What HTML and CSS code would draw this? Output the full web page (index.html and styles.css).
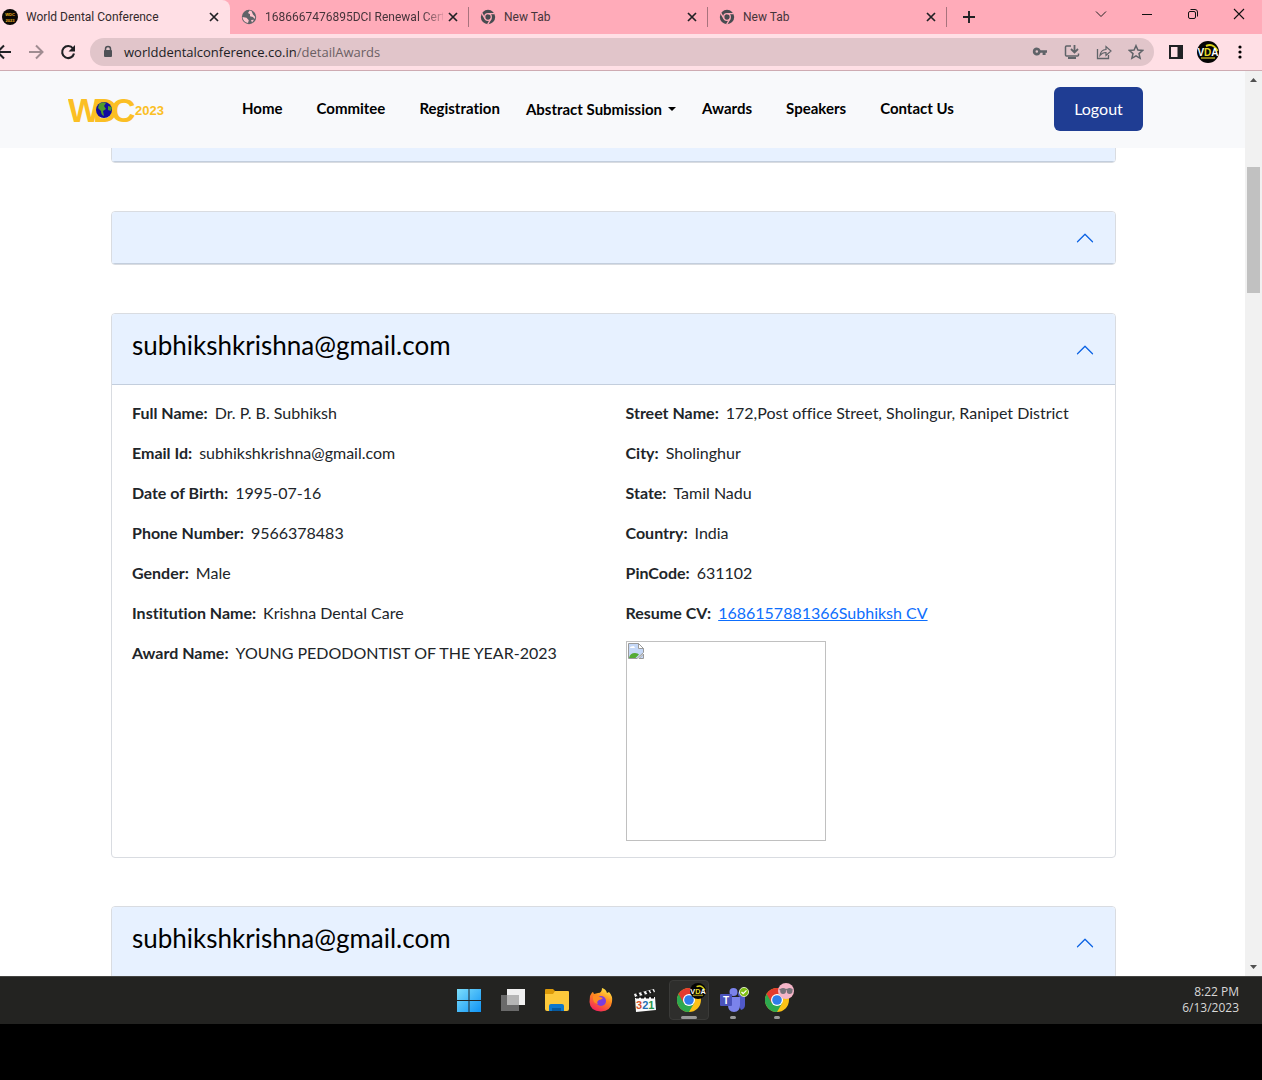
FILE: index.html
```html
<!DOCTYPE html>
<html lang="en">
<head>
<meta charset="utf-8">
<meta name="viewport" content="width=device-width, initial-scale=1">
<title>World Dental Conference</title>
<link rel="stylesheet" href="styles.css">
</head>
<body>
<svg class="defs" aria-hidden="true">
  <symbol id="close" viewBox="0 0 16 16"><path d="M4 4l8 8M12 4l-8 8" stroke="#202124" stroke-width="1.7"/></symbol>
  <symbol id="chrome-gray" viewBox="0 0 16 16"><circle cx="8" cy="8" r="7.2" fill="#474b50"/><circle cx="8" cy="8" r="3.3" fill="none" stroke="#ffabb9" stroke-width="1.3"/><path d="M8 4.6h6.6M5 9.7L1.8 4.2M11 9.7l-3.3 5.6" stroke="#ffabb9" stroke-width="1.3"/></symbol>
  <symbol id="chrome" viewBox="0 0 24 24"><circle cx="12" cy="12" r="12" fill="#fbc116"/><path d="M12 12L1.6 6A12 12 0 0 0 12 24l5.2-9z" fill="#2da94f"/><path d="M1.6 6A12 12 0 0 1 22.4 6H12l-5.2 9z" fill="#e33b2e"/><circle cx="12" cy="12" r="6" fill="#fff"/><circle cx="12" cy="12" r="4.8" fill="#2f7de9"/></symbol>
  <symbol id="chevron" viewBox="0 0 16 16"><path d="M1.646 4.646a.5.5 0 0 1 .708 0L8 10.293l5.646-5.647a.5.5 0 0 1 .708.708l-6 6a.5.5 0 0 1-.708 0l-6-6a.5.5 0 0 1 0-.708z" fill="#0c63e4" transform="rotate(180 8 8)"/></symbol>
  <symbol id="vda" viewBox="0 0 22 22"><circle cx="11" cy="11" r="11" fill="#050505"/><path d="M9 5Q16 1.500 20.500 10" fill="none" stroke="#d9d21c" stroke-width="2"/><path d="M4 17h14" stroke="#8a7d18" stroke-width="2"/><text x="11" y="15" text-anchor="middle" class="vda-text">V<tspan fill="#e8dd25">D</tspan>A</text></symbol>
</svg>

<header class="browser">
  <div class="tabstrip">
    <div class="tab tab-active">
      <svg class="fav" viewBox="0 0 16 16"><circle cx="8" cy="8" r="8" fill="#0a0805"/><text x="8" y="7" text-anchor="middle" class="fav-text">WDC</text><text x="8" y="13" text-anchor="middle" class="fav-text">2023</text></svg>
      <span class="tab-title">World Dental Conference</span>
      <button class="plain" aria-label="Close tab"><svg class="ic16"><use href="#close"/></svg></button>
    </div>
    <div class="tab">
      <svg class="fav" viewBox="0 0 16 16"><circle cx="8" cy="8" r="7.200" fill="#5f6368"/><path d="M8.500 1.500L7 4l2 1.300v2l3 .7 1.500 2L14.300 8 12 5.500 10.500 2zM1.500 8l4 .7 2.300 2.500L7 14Q2 13 1.500 8zM10 11l3-.3-2 2.800z" fill="#ffc4cd"/></svg>
      <span class="tab-title tab-fade">1686667476895DCI Renewal Cert</span>
      <button class="plain" aria-label="Close tab"><svg class="ic16"><use href="#close"/></svg></button>
    </div>
    <div class="tab">
      <svg class="fav"><use href="#chrome-gray"/></svg>
      <span class="tab-title">New Tab</span>
      <button class="plain" aria-label="Close tab"><svg class="ic16"><use href="#close"/></svg></button>
    </div>
    <div class="tab">
      <svg class="fav"><use href="#chrome-gray"/></svg>
      <span class="tab-title">New Tab</span>
      <button class="plain" aria-label="Close tab"><svg class="ic16"><use href="#close"/></svg></button>
    </div>
    <button class="plain new-tab" aria-label="New tab"><svg class="ic16" viewBox="0 0 16 16"><path d="M8 2v12M2 8h12" stroke="#202124" stroke-width="1.900"/></svg></button>
    <div class="win-controls">
      <button class="plain" aria-label="Search tabs"><svg class="ic16" viewBox="0 0 16 16"><path d="M3 5.500l5 5 5-5" fill="none" stroke="#222"/></svg></button>
      <button class="plain" aria-label="Minimize"><svg class="ic16" viewBox="0 0 16 16"><path d="M3 8.500h10" stroke="#111"/></svg></button>
      <button class="plain" aria-label="Restore"><svg class="ic16" viewBox="0 0 16 16"><rect x="3.500" y="5.500" width="7" height="7" rx="1.500" fill="none" stroke="#111"/><path d="M5.500 3.500H10a2.500 2.500 0 0 1 2.500 2.500v4.500" fill="none" stroke="#111"/></svg></button>
      <button class="plain" aria-label="Close"><svg class="ic16" viewBox="0 0 16 16"><path d="M3 3l10 10M13 3L3 13" stroke="#111" stroke-width="1.100"/></svg></button>
    </div>
  </div>
  <div class="toolbar">
    <div class="history">
      <button class="plain" aria-label="Back"><svg class="ic16" viewBox="0 0 16 16"><path d="M15 8H2M8 1.500L1.500 8 8 14.500" fill="none" stroke="#202124" stroke-width="2"/></svg></button>
      <button class="plain" aria-label="Forward"><svg class="ic16" viewBox="0 0 16 16"><path d="M1 8h13M8 1.500L14.500 8 8 14.500" fill="none" stroke="#a08c91" stroke-width="2"/></svg></button>
      <button class="plain" aria-label="Reload"><svg class="ic16" viewBox="0 0 16 16"><path d="M13 4.500A6 6 0 1 0 14 9.500" fill="none" stroke="#202124" stroke-width="2.100"/><path d="M15 1v6.500H8.500z" fill="#202124"/></svg></button>
    </div>
    <div class="omnibox">
      <svg class="lock" viewBox="0 0 10 14"><path d="M2.500 6V4a2.500 2.500 0 0 1 5 0v2" fill="none" stroke="#4e5156" stroke-width="1.500"/><rect x="1" y="5" width="8" height="7" rx="1" fill="#4e5156"/></svg>
      <span class="url">worlddentalconference.co.in<span class="url-path">/detailAwards</span></span>
      <div class="omni-icons">
        <svg class="ic16" viewBox="0 0 16 16"><path d="M4.800 3.500a4 4 0 1 0 3.800 5.300h2V11h3V8.800H15V6.200H8.600A4 4 0 0 0 4.800 3.500zm0 2.700a1.300 1.300 0 1 1 0 2.600 1.300 1.300 0 0 1 0-2.600z" fill="#5f6368"/></svg>
        <svg class="ic16" viewBox="0 0 16 16"><path d="M7 2H2.500Q1.500 2 1.500 3v8q0 1 1 1h11q1 0 1-1V9.500" fill="none" stroke="#5f6368" stroke-width="1.500"/><path d="M10.500 1v7M7 5l3.500 3.500L14 5M4 14h8" fill="none" stroke="#5f6368" stroke-width="1.800"/></svg>
        <svg class="ic16" viewBox="0 0 16 16"><path d="M1.500 5v9.500h11V11" fill="none" stroke="#5f6368" stroke-width="1.300"/><path d="M4 11.500Q4.500 6 10 5.500V2.500L15 7l-5 4.500V8.500Q6.500 8.300 4 11.500z" fill="none" stroke="#5f6368" stroke-width="1.200"/></svg>
        <svg class="ic16" viewBox="0 0 16 16"><path d="M8 1.700l1.900 4.400 4.700.4L11 9.600l1.100 4.700L8 11.800l-4.100 2.500L5 9.600 1.400 6.500l4.700-.4z" fill="none" stroke="#5f6368" stroke-width="1.500"/></svg>
      </div>
    </div>
    <div class="tools">
      <button class="plain" aria-label="Side panel"><svg class="ic16" viewBox="0 0 16 16"><rect x="2" y="2" width="12" height="12" fill="none" stroke="#202124" stroke-width="2"/><path d="M9.500 2H14v12H9.500z" fill="#202124"/></svg></button>
      <button class="plain" aria-label="Profile"><svg class="avatar"><use href="#vda"/></svg></button>
      <button class="plain" aria-label="Menu"><svg class="ic16" viewBox="0 0 16 16"><circle cx="8" cy="3" r="1.600"/><circle cx="8" cy="8" r="1.600"/><circle cx="8" cy="13" r="1.600"/></svg></button>
    </div>
  </div>
</header>

<div class="viewport">
  <div class="page">
    <nav class="navbar">
      <a href="#" class="logo" aria-label="WDC 2023">
        <svg viewBox="0 0 96 30"><text x="0 25 43" y="28" class="logo-wdc">WDC</text><text x="67" y="21" class="logo-year">2023</text><circle cx="36" cy="16" r="8" fill="#120ba0"/><path d="M31 10q4-3 7-1l-2 3 2 3-3 2 1 5q-3-1-3-5l-3-3zM40 12l4 1-1 4-3-1z" fill="#4f9a2c"/></svg>
      </a>
      <ul class="menu">
        <li><a href="#">Home</a></li>
        <li><a href="#">Commitee</a></li>
        <li><a href="#">Registration</a></li>
        <li class="dropdown"><a href="#">Abstract Submission</a></li>
        <li><a href="#">Awards</a></li>
        <li><a href="#">Speakers</a></li>
        <li><a href="#">Contact Us</a></li>
      </ul>
      <button class="logout">Logout</button>
    </nav>
    <main class="list">
      <section class="card card-passed"><button class="card-head" aria-label="Toggle"><svg class="chev"><use href="#chevron"/></svg></button></section>
      <section class="card"><button class="card-head" aria-label="Toggle"><svg class="chev"><use href="#chevron"/></svg></button></section>
      <section class="card">
        <button class="card-head"><span class="card-title">subhikshkrishna@gmail.com</span><svg class="chev"><use href="#chevron"/></svg></button>
        <div class="card-body">
          <div class="col">
            <p><b>Full Name:</b>Dr. P. B. Subhiksh</p>
            <p><b>Email Id:</b>subhikshkrishna@gmail.com</p>
            <p><b>Date of Birth:</b>1995-07-16</p>
            <p><b>Phone Number:</b>9566378483</p>
            <p><b>Gender:</b>Male</p>
            <p><b>Institution Name:</b>Krishna Dental Care</p>
            <p><b>Award Name:</b>YOUNG PEDODONTIST OF THE YEAR-2023</p>
          </div>
          <div class="col">
            <p><b>Street Name:</b>172,Post office Street, Sholingur, Ranipet District</p>
            <p><b>City:</b>Sholinghur</p>
            <p><b>State:</b>Tamil Nadu</p>
            <p><b>Country:</b>India</p>
            <p><b>PinCode:</b>631102</p>
            <p><b>Resume CV:</b><a href="#">1686157881366Subhiksh CV</a></p>
            <div class="photo"><svg class="ic16" viewBox="0 0 16 16"><path d="M.5.500h10l5 5v4L9 15.500H.5z" fill="#c5d8f7" stroke="#9a9a9a"/><path d="M10.500.500v5h5z" fill="#fff" stroke="#9a9a9a"/><path d="M2 5q0-2 2-1.500Q6 2 7 5z" fill="#fff"/><path d="M1 15q1-5 6-5 3 0 4 1.500L7.500 15z" fill="#54ab35"/><path d="M15.500 11v4.500H11z" fill="#c5d8f7" stroke="#9a9a9a"/></svg></div>
          </div>
        </div>
      </section>
      <section class="card">
        <button class="card-head"><span class="card-title">subhikshkrishna@gmail.com</span><svg class="chev"><use href="#chevron"/></svg></button>
      </section>
    </main>
  </div>
  <div class="scrollbar" aria-hidden="true">
    <svg class="arrow" viewBox="0 0 17 17"><path d="M5 11l3.500-4 3.500 4z" fill="#505050"/></svg>
    <div class="track"><div class="thumb"></div></div>
    <svg class="arrow" viewBox="0 0 17 17"><path d="M5 6l3.500 4L12 6z" fill="#505050"/></svg>
  </div>
</div>

<footer class="taskbar">
  <div class="apps">
    <button class="app" aria-label="Start"><svg viewBox="0 0 24 24"><defs><linearGradient id="w" x1="0" y1="0" x2="24" y2="24" gradientUnits="userSpaceOnUse"><stop stop-color="#7fe0fb"/><stop offset="1" stop-color="#0f93f5"/></linearGradient></defs><path d="M0 1h11.500v11H0zM12.500 1H24v11H12.500zM0 13h11.500v11H0zM12.500 13H24v11H12.500z" fill="url(#w)"/></svg></button>
    <button class="app" aria-label="Task view"><svg viewBox="0 0 24 24"><path d="M6 1h18v16H6z" fill="#f0f0f0"/><path d="M0 7h18v16H0z" fill="#6a6a6a"/><path d="M6 7h12v10H6z" fill="#b5b5b5"/></svg></button>
    <button class="app" aria-label="File Explorer"><svg viewBox="0 0 24 24"><path d="M0 2q0-1 1-1h7l3 3v5H0z" fill="#dc9a09"/><path d="M10 3h13q1 0 1 1v17q0 2-2 2H2q-2 0-2-2V6h8z" fill="#fdc93b"/><path d="M4 23v-5q0-2 2-2h11q2 0 2 2v5z" fill="#0e77cb"/><path d="M7 23v-3h9v3z" fill="#075a9f"/></svg></button>
    <button class="app" aria-label="Firefox"><svg viewBox="0 0 24 24"><defs><linearGradient id="f" x1="0.800" y1="0" x2="0.300" y2="1"><stop stop-color="#fff04a"/><stop offset=".45" stop-color="#ff8a1e"/><stop offset="1" stop-color="#f5215c"/></linearGradient></defs><path d="M1 8q2-4 3-4l1 2 4-1q4 0 4-5 4 1 5 5l2-1q4 4 3 10-1 9-11 9.500Q1 23 .5 14z" fill="url(#f)"/><circle cx="12" cy="13" r="5" fill="#7a3ce0"/><path d="M4 8q4-2 7 1l3 1q-2 2-4 2-3 2-1 4-6-1-5-8z" fill="#ff8c22"/></svg></button>
    <button class="app" aria-label="Media Player Classic"><svg viewBox="0 0 24 24"><path d="M2 10l20-1 1 13-20 2z" fill="#fbfbfb"/><path d="M1 6l20-5 1 3L2 9z" fill="#f3f3f3"/><path d="M4 5l2 3M9 4l2 3M14 3l2 3M18 2l2 3" stroke="#111" stroke-width="2.500"/><path d="M3 9.500h19" stroke="#111" stroke-width="2" stroke-dasharray="3 2"/><text x="3" y="21" class="mpc"><tspan fill="#d9532a">3</tspan><tspan fill="#256fb5">2</tspan><tspan fill="#28964a">1</tspan></text></svg></button>
    <button class="app app-current" aria-label="Chrome"><svg><use href="#chrome"/></svg><svg class="badge"><use href="#vda"/></svg></button>
    <button class="app app-running" aria-label="Teams"><svg viewBox="0 0 24 24"><circle cx="12.500" cy="4" r="4" fill="#7b83eb"/><circle cx="20" cy="6" r="3" fill="#5059c9"/><path d="M14 9h10v8q0 4-4 5z" fill="#5059c9"/><path d="M7 9h12v8q0 7-6 7t-6-7z" fill="#7b83eb"/><rect x="-1" y="6" width="12" height="12" rx="1" fill="#4b53bc"/><text x="5" y="16" text-anchor="middle" class="teams">T</text></svg><svg class="badge badge-small" viewBox="0 0 12 12"><circle cx="6" cy="6" r="5.500" fill="#80bd15" stroke="#eef6dd"/><path d="M3 6l2 2 4-4" fill="none" stroke="#fff" stroke-width="1.500"/></svg></button>
    <button class="app app-running" aria-label="Chrome, second profile"><svg><use href="#chrome"/></svg><svg class="badge" viewBox="0 0 22 22"><circle cx="11" cy="11" r="11" fill="#f5b5c8"/><path d="M2 9h18" stroke="#777" stroke-width="2"/><circle cx="7" cy="11" r="4" fill="#77727a"/><circle cx="16" cy="11" r="4" fill="#77727a"/></svg></button>
  </div>
  <div class="clock"><span>8:22 PM</span><span>6/13/2023</span></div>
</footer>
</body>
</html>
```

FILE: styles.css
```css
* { box-sizing: border-box; }
body {
  margin: 0;
  height: 100vh;
  padding-bottom: 56px;
  display: flex;
  flex-direction: column;
  background: #000;
  color: #212529;
  font: 16px/24px Lato, sans-serif;
  font-variant-ligatures: none;
}
svg { display: block; }
button { font: inherit; cursor: pointer; }
.defs { position: absolute; width: 0; height: 0; }
.plain { display: flex; padding: 0; border: 0; background: none; }
.ic16, .fav { width: 16px; height: 16px; flex: none; }

/* Browser window frame */
.browser { flex: none; font: 12px/16px Roboto, "Noto Sans", sans-serif; }
.tabstrip { display: flex; height: 34px; background: #ffabb9; }
.tab {
  display: flex;
  align-items: center;
  gap: 8px;
  flex: 0 1 239px;
  padding: 0 8px 0 11px;
  min-width: 0;
  color: #45343a;
  background: linear-gradient(#a8737d, #a8737d) right center / 1px 20px no-repeat;
}
.tab-active {
  flex-basis: 230px;
  padding-left: 2px;
  background: #ffdfe5;
  border-top-right-radius: 8px;
  color: #33292c;
}
.tab-title { flex: 1; overflow: hidden; white-space: nowrap; }
.tab-fade { margin-right: -6px; mask-image: linear-gradient(to right, #000 88%, #0003); }
.fav-text { font: bold 4px "Liberation Sans", sans-serif; fill: #f0b323; }
.vda-text { font: bold 10px "Liberation Sans", sans-serif; fill: #fff; }
.new-tab { align-items: center; padding: 0 14px; }
.win-controls { display: flex; height: 28px; margin-left: auto; }
.win-controls .plain { width: 46px; align-items: center; justify-content: center; }
.toolbar {
  display: flex;
  align-items: center;
  height: 37px;
  background: #ffdfe5;
  border-bottom: 1px solid #ceabb2;
}
.history { display: flex; gap: 16px; width: 90px; margin-left: -4px; flex: none; }
.omnibox {
  display: flex;
  align-items: center;
  flex: 1;
  height: 28px;
  margin-left: 4px;
  padding: 0 10px 0 13px;
  border-radius: 14px;
  background: #e1c5ca;
}
.lock { width: 10px; height: 14px; }
.url { flex: 1; margin-left: 11px; font-family: "Open Sans", "Noto Sans", sans-serif; font-size: 13px; color: #202124; }
.url-path { color: #6b6064; }
.omni-icons { display: flex; gap: 16px; }
.tools { display: flex; align-items: center; gap: 13px; padding: 0 14px; }
.avatar { width: 22px; height: 22px; }

/* Page area and its scrollbar */
.viewport { display: flex; flex: 1; min-height: 0; background: #fff; }
.page { flex: 1; display: flex; flex-direction: column; min-width: 0; }
.scrollbar { display: flex; flex-direction: column; width: 17px; background: #f1f1f1; }
.arrow { width: 17px; height: 17px; flex: none; }
.track { flex: 1; padding: 79px 2px 0; }
.thumb { height: 126px; background: #c1c1c1; }

.navbar {
  display: flex;
  align-items: center;
  flex: none;
  height: 77px;
  padding: 0 102px 2px 68px;
  background: #f8f9fb;
}
.logo { width: 96px; }
.logo svg { width: 96px; height: 30px; }
.logo-wdc { font: bold 34px "Liberation Sans", sans-serif; fill: #fbbf24; }
.logo-year { font: bold 13px "Liberation Sans", sans-serif; fill: #fbbf24; }
.menu { display: flex; margin: 0 0 0 61px; padding: 0; list-style: none; white-space: nowrap; }
.menu li { padding: 0 8px; }
.menu a { display: block; padding: 0 9px; color: #000; font-size: 15px; font-weight: 700; text-decoration: none; }
.menu .dropdown { padding: 1px 0 0; }
.dropdown a::after {
  content: "";
  display: inline-block;
  margin-left: 6px;
  vertical-align: 4px;
  border: 4px solid transparent;
  border-top-color: currentColor;
  border-bottom: 0;
}
.logout {
  width: 89px;
  height: 44px;
  margin-left: auto;
  padding: 0;
  border: 0;
  border-radius: 6px;
  background: #1f3d93;
  color: #fff;
}

.list {
  display: flex;
  flex-direction: column;
  gap: 48px;
  flex: 1;
  min-height: 0;
  padding: 0 129px 0 111px;
  overflow: hidden;
}
.card { flex: none; border: 1px solid #d9dce1; border-radius: 4px; overflow: hidden; }
.card-passed { margin-top: -39px; }
.card-head {
  display: flex;
  align-items: center;
  justify-content: space-between;
  width: 100%;
  min-height: 52px;
  padding: 16px 20px;
  border: 0;
  background: #e7f1ff;
  box-shadow: inset 0 -1px 0 #c3cedd;
  color: #000;
  text-align: left;
}
.card-title { margin-bottom: 8px; font-size: 26px; line-height: 31px; }
.chev { width: 20px; height: 20px; margin-left: auto; }
.card-body { display: grid; grid-template-columns: 1fr 1fr; gap: 24px; padding: 16px 20px; }
.card-body p { margin: 0 0 16px; }
.card-body b { margin-right: 7px; font-weight: 700; }
.card-body p:last-child { margin: 0; }
.card-body a { color: #0d6efd; }
.photo { width: 200px; height: 200px; padding: 1px; border: 1px solid #c0c0c0; }

/* Taskbar */
.taskbar {
  display: grid;
  grid-template-columns: 1fr auto 1fr;
  align-items: center;
  flex: none;
  height: 48px;
  padding: 0 23px 2px 7px;
  background: #232321;
  border-top: 1px solid #444442;
  color: #d8d8d8;
  font: 12px/16px "Open Sans", "Noto Sans", sans-serif;
}
.apps { display: flex; grid-column: 2; gap: 4px; }
.app {
  position: relative;
  display: flex;
  align-items: center;
  justify-content: center;
  width: 40px;
  height: 40px;
  padding: 0;
  border: 1px solid transparent;
  border-radius: 4px;
  background: none;
}
.app svg { width: 24px; height: 24px; overflow: visible; }
.app .badge { position: absolute; top: 2px; right: 2px; width: 16px; height: 16px; }
.app .badge-small { top: 6px; right: 3px; width: 10px; height: 10px; }
.app-current { background: #2e2e2c; border-color: #3a3a38; }
.app-current::after, .app-running::after {
  content: "";
  position: absolute;
  bottom: 0;
  left: 16px;
  width: 6px;
  height: 3px;
  border-radius: 2px;
  background: #9a9a9a;
}
.app-current::after { left: 11px; width: 16px; }
.mpc { font: bold 11px "Liberation Sans", sans-serif; }
.teams { font: bold 10px "Liberation Sans", sans-serif; fill: #fff; }
.clock { display: flex; flex-direction: column; text-align: right; }
```
